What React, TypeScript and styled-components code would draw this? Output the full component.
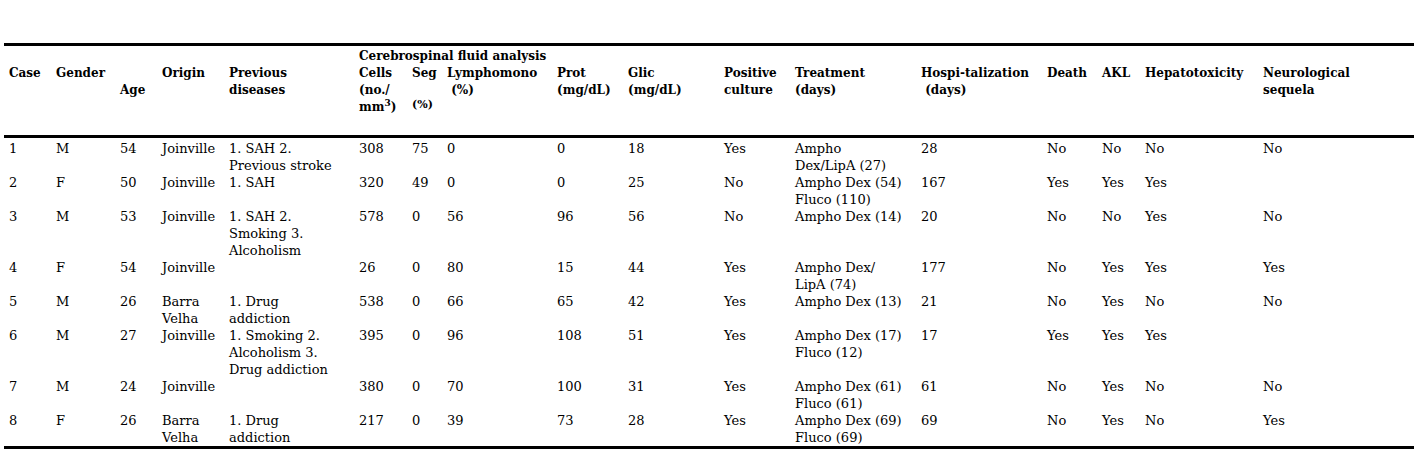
import React from "react";
import styled, { createGlobalStyle } from "styled-components";

const Global = createGlobalStyle`
  html, body { margin: 0; padding: 0; background: #fff; }
  body { font-family: "DejaVu Serif", "Liberation Serif", serif; color: #000; }
`;

const Page = styled.div`
  padding: 43px 4px 0 4px;
  width: 1410px;
`;

const Table = styled.table`
  width: 1410px;
  table-layout: fixed;
  border-collapse: collapse;
  border-top: 3px solid #000;
  border-bottom: 3px solid #000;
`;

const Head = styled.thead`
  border-bottom: 3px solid #000;
`;

const Th = styled.th<{ $tall?: boolean }>`
  padding: ${(p) => (p.$tall ? "0" : "2px")} 0 0 5px;
  height: ${(p) => (p.$tall ? "70px" : "15px")};
  vertical-align: top;
  text-align: left;
  font-size: 12px;
  font-weight: bold;
  line-height: 17px;
  white-space: nowrap;
  overflow: visible;
`;

const Td = styled.td`
  padding: 0 0 0 5px;
  vertical-align: top;
  text-align: left;
  font-size: 13px;
  font-weight: normal;
  line-height: 17px;
  white-space: nowrap;
`;

const FirstRow = styled.tr`
  & > td { padding-top: 2px; }
`;

const Small = styled.span`
  font-size: 11px;
  line-height: 0;
  vertical-align: 3px;
`;

const Sup = styled.span`
  font-size: 9px;
  line-height: 0;
  vertical-align: 5px;
`;

const widths = [47, 64, 42, 67, 130, 53, 35, 110, 71, 96, 71, 126, 126, 55, 43, 118, 156];

type Cell = string | string[];
type Row = Cell[];

const rows: Row[] = [
  ["1", "M", "54", "Joinville", ["1. SAH 2.", "Previous stroke"], "308", "75", "0", "0", "18", "Yes", ["Ampho", "Dex/LipA (27)"], "28", "No", "No", "No", "No"],
  ["2", "F", "50", "Joinville", ["1. SAH"], "320", "49", "0", "0", "25", "No", ["Ampho Dex (54)", "Fluco (110)"], "167", "Yes", "Yes", "Yes", ""],
  ["3", "M", "53", "Joinville", ["1. SAH 2.", "Smoking 3.", "Alcoholism"], "578", "0", "56", "96", "56", "No", ["Ampho Dex (14)"], "20", "No", "No", "Yes", "No"],
  ["4", "F", "54", "Joinville", "", "26", "0", "80", "15", "44", "Yes", ["Ampho Dex/", "LipA (74)"], "177", "No", "Yes", "Yes", "Yes"],
  ["5", "M", "26", ["Barra", "Velha"], ["1. Drug", "addiction"], "538", "0", "66", "65", "42", "Yes", ["Ampho Dex (13)"], "21", "No", "Yes", "No", "No"],
  ["6", "M", "27", "Joinville", ["1. Smoking 2.", "Alcoholism 3.", "Drug addiction"], "395", "0", "96", "108", "51", "Yes", ["Ampho Dex (17)", "Fluco (12)"], "17", "Yes", "Yes", "Yes", ""],
  ["7", "M", "24", "Joinville", "", "380", "0", "70", "100", "31", "Yes", ["Ampho Dex (61)", "Fluco (61)"], "61", "No", "Yes", "No", "No"],
  ["8", "F", "26", ["Barra", "Velha"], ["1. Drug", "addiction"], "217", "0", "39", "73", "28", "Yes", ["Ampho Dex (69)", "Fluco (69)"], "69", "No", "Yes", "No", "Yes"],
];

const Lines: React.FC<{ value: Cell }> = ({ value }) => {
  const lines = Array.isArray(value) ? value : [value];
  return (
    <>
      {lines.map((l, i) => (
        <React.Fragment key={i}>
          {i > 0 && <br />}
          {l}
        </React.Fragment>
      ))}
    </>
  );
};

export default function App() {
  return (
    <Page>
      <Global />
      <Table>
        <colgroup>
          {widths.map((w, i) => (
            <col key={i} style={{ width: w }} />
          ))}
        </colgroup>
        <Head>
          <tr>
            <Th colSpan={5} />
            <Th colSpan={5}>Cerebrospinal fluid analysis</Th>
            <Th colSpan={7} />
          </tr>
          <tr>
            <Th $tall>Case</Th>
            <Th $tall>Gender</Th>
            <Th $tall>
              <br />
              Age
            </Th>
            <Th $tall>Origin</Th>
            <Th $tall>
              Previous
              <br />
              diseases
            </Th>
            <Th $tall>
              Cells
              <br />
              (no./
              <br />
              mm<Sup>3</Sup>)
            </Th>
            <Th $tall>
              Seg
              <br />
              <br />
              <Small>(%)</Small>
            </Th>
            <Th $tall>
              Lymphomono
              <br />
              &nbsp;(%)
            </Th>
            <Th $tall>
              Prot
              <br />
              (mg/dL)
            </Th>
            <Th $tall>
              Glic
              <br />
              (mg/dL)
            </Th>
            <Th $tall>
              Positive
              <br />
              culture
            </Th>
            <Th $tall>
              Treatment
              <br />
              (days)
            </Th>
            <Th $tall>
              Hospi-talization
              <br />
              &nbsp;(days)
            </Th>
            <Th $tall>Death</Th>
            <Th $tall>AKL</Th>
            <Th $tall>Hepatotoxicity</Th>
            <Th $tall>
              Neurological
              <br />
              sequela
            </Th>
          </tr>
        </Head>
        <tbody>
          {rows.map((r, ri) => {
            const cells = r.map((c, ci) => (
              <Td key={ci}>
                <Lines value={c} />
              </Td>
            ));
            return ri === 0 ? <FirstRow key={ri}>{cells}</FirstRow> : <tr key={ri}>{cells}</tr>;
          })}
        </tbody>
      </Table>
    </Page>
  );
}
